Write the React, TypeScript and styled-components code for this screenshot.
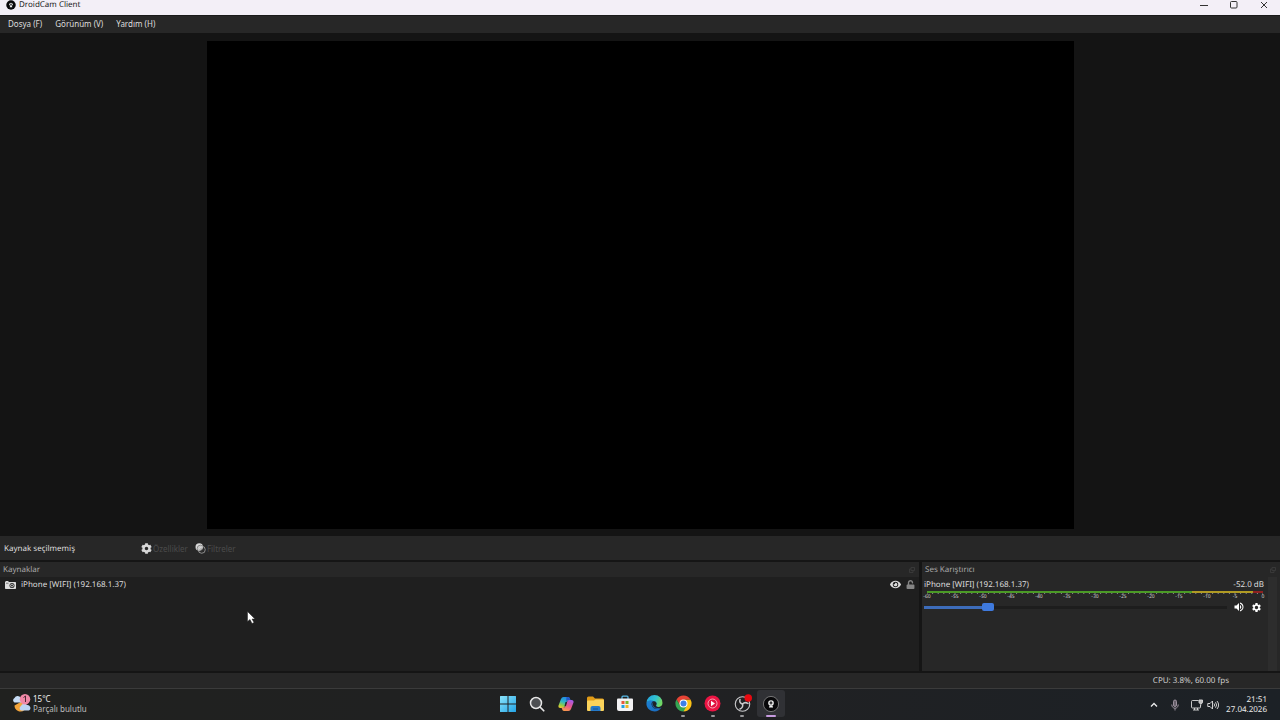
import React, { useState } from "react";
import styled, { createGlobalStyle } from "styled-components";
import { FaCog, FaEye, FaUnlock } from "react-icons/fa";
import { MdSettings, MdVolumeUp } from "react-icons/md";

const GlobalStyle = createGlobalStyle`
  * { box-sizing: border-box; }
  body { margin: 0; background: #141414; }
  button { font: inherit; color: inherit; background: none; border: 0; padding: 0; }
  svg { display: block; flex: none; }
`;

const Desktop = styled.div`
  position: relative;
  height: 100vh;
  display: flex;
  flex-direction: column;
  overflow: hidden;
  font: 8px/12px "Noto Sans", "Open Sans", sans-serif;
  text-rendering: geometricPrecision;
  color: #dedede;
`;

const TitleBar = styled.header`
  display: flex;
  align-items: center;
  gap: 3px;
  height: 16px;
  padding: 0 1px 5px 6px;
  background: #f3eff7;
  border-bottom: 1px solid #1a1a1a;
  color: #222;
`;

const WindowTitle = styled.h1`
  flex: 1;
  margin: 0;
  font: inherit;
`;

const WindowControls = styled.div`
  display: flex;
`;

const WindowButton = styled.button`
  display: grid;
  place-items: center;
  width: 30px;
  height: 10px;
`;

const MenuBar = styled.nav`
  display: flex;
  gap: 13px;
  height: 17px;
  padding: 2px 8px 3px;
  align-items: center;
  background: #272727;
`;

const MenuButton = styled.button``;

const Preview = styled.main`
  flex: 1;
  min-height: 0;
  display: flex;
  justify-content: center;
  padding: 8px 0 7px 1px;
  background: #141414;
`;

const VideoCanvas = styled.div`
  aspect-ratio: 16 / 9;
  background: #000;
`;

const SourceToolbar = styled.section`
  display: flex;
  align-items: center;
  height: 24px;
  padding: 1px 4px 0;
  background: #272727;
`;

const SourceStatus = styled.span`
  width: 137px;
`;

const ToolButton = styled.button`
  display: flex;
  align-items: center;
  gap: 1px;
  margin-right: 7px;
  &:disabled { color: #4b4b4b; }
  svg { color: #d8d8d8; }
`;

const Docks = styled.div`
  display: grid;
  grid-template-columns: minmax(0, 1fr) 358px;
  gap: 3px;
  height: 113px;
  padding: 2px 0;
  background: #151515;
`;

const Dock = styled.section<{ $fill: string }>`
  display: flex;
  flex-direction: column;
  background: ${(p) => p.$fill};
`;

const DockHeader = styled.div`
  display: flex;
  align-items: center;
  justify-content: space-between;
  height: 15px;
  padding: 1px 4px 0 3px;
  background: #272727;
  color: #a8a8a8;
`;

const DockTitle = styled.h2`
  margin: 0;
  font: inherit;
`;

const SourceRow = styled.div`
  display: flex;
  align-items: center;
  height: 15px;
  padding: 0 1px 0 5px;
`;

const SourceName = styled.span`
  flex: 1;
  padding-left: 5px;
`;

const RowButton = styled.button`
  display: grid;
  place-items: center;
  width: 15px;
  height: 12px;
`;

const MixerBody = styled.div`
  display: flex;
  flex: 1;
  padding-right: 3px;
`;

const Channel = styled.div`
  flex: 1;
  min-width: 0;
  padding: 2px 4px 0 2px;
`;

const ChannelHead = styled.div`
  display: flex;
  justify-content: space-between;
`;

const Meter = styled.div`
  margin: 0 1px 0 3px;
`;

const MeterBar = styled.div`
  height: 2px;
  background: linear-gradient(90deg, #4b9a26 0 79%, #b09a23 79% 97%, #8f2020 97%);
`;

const Ticks = styled.svg`
  width: 100%;
  height: 2px;
`;

const ScaleLabels = styled.div`
  display: flex;
  justify-content: space-between;
  font-size: 5px;
  line-height: 5px;
  color: #d0d0d0;
`;

const ScaleLabel = styled.span`
  display: flex;
  justify-content: center;
  width: 0;
`;

const VolumeRow = styled.div`
  display: flex;
  align-items: center;
  height: 14px;
  padding-right: 2px;
`;

const VolumeSlider = styled.input`
  appearance: none;
  flex: 1;
  min-width: 0;
  height: 9px;
  margin: 0 6px 0 0;
  background: linear-gradient(90deg, #3d6cba 0 20%, #1d1d1d 20%) center / 100% 3px no-repeat;
  &::-webkit-slider-thumb {
    appearance: none;
    width: 12px;
    height: 8px;
    border-radius: 2px;
    background: #3f7ade;
  }
`;

const ChannelButton = styled.button`
  display: grid;
  place-items: center;
  width: 11px;
  height: 12px;
  & + & { margin-left: 7px; }
`;

const ScrollTrack = styled.div`
  width: 9px;
  background: #2d2d2d;
`;

const StatusBar = styled.footer`
  height: 15px;
  padding: 2px 51px 0 0;
  text-align: right;
  background: #272727;
  color: #cfcfcf;
`;

const Taskbar = styled.footer`
  display: grid;
  grid-template-columns: 1fr 293px 1fr;
  height: 32px;
  border-top: 1px solid #3b3b3b;
  background: linear-gradient(90deg, #20211f, #202123 60%, #1c2126);
  line-height: 10px;
`;

const Weather = styled.button`
  display: flex;
  align-items: center;
  gap: 2px;
  padding: 0 0 1px 12px;
  text-align: left;
  color: #bdbdbd;
`;

const Temperature = styled.strong`
  display: block;
  font-weight: 400;
  color: #f0f0f0;
`;

const Apps = styled.div`
  display: flex;
  justify-content: space-between;
  align-items: center;
  padding: 0 1px 2px 0;
`;

const AppButton = styled.button<{ $active?: boolean; $running?: boolean }>`
  position: relative;
  display: grid;
  place-items: center;
  width: 28px;
  height: 27px;
  border-radius: 3px;
  background: ${(p) => (p.$active ? "#303135" : "transparent")};
  &::after {
    content: "";
    display: ${(p) => (p.$running ? "block" : "none")};
    position: absolute;
    bottom: 0;
    width: ${(p) => (p.$active ? 10 : 4)}px;
    height: 2px;
    border-radius: 1px;
    background: ${(p) => (p.$active ? "#c79be0" : "#98989b")};
  }
`;

const Tray = styled.div`
  display: flex;
  justify-content: flex-end;
  align-items: center;
  padding: 0 13px 0 0;
  color: #ececec;
`;

const TrayButton = styled.button<{ $gap: number }>`
  margin-right: ${(p) => p.$gap}px;
`;

const Clock = styled.time`
  width: 48px;
  display: flex;
  flex-direction: column;
  align-items: flex-end;
`;

const Pointer = styled.svg`
  position: absolute;
  left: 247px;
  top: 611px;
`;

const LensLogo = ({ size }: { size: number }) => (
  <svg width={size} height={size} viewBox="0 0 16 16" aria-hidden="true">
    <circle cx="8" cy="8" r="7.6" fill="#08080a" stroke="#8a8a8a" strokeWidth={size > 12 ? 0.8 : 0} />
    <circle cx="8" cy="7" r="2.8" fill="#f2f2f2" />
    <circle cx="8" cy="7" r="1.400" fill="#08080a" />
    <circle cx="8" cy="7" r="0.6" fill="#f2f2f2" />
    <path d="M6.6 9.4h2.8l.7 2.2H5.9z" fill="#f2f2f2" />
  </svg>
);

const FiltersIcon = () => (
  <svg width="11" height="11" viewBox="0 0 22 22" aria-hidden="true">
    <circle cx="8.5" cy="8" r="7.5" fill="#d8d8d8" />
    <circle cx="11" cy="11" r="6.6" fill="none" stroke="#3a3a3a" strokeWidth="1" />
    <circle cx="13.5" cy="13.5" r="7" fill="none" stroke="#b8b8b8" strokeWidth="1.4" />
    <path d="M9 14l5-5M11 15l4-4" stroke="#555" strokeWidth="1" />
  </svg>
);

const CameraIcon = () => (
  <svg width="11" height="8" viewBox="0 0 22 16" aria-hidden="true">
    <path d="M0 3V2h1V0h6v2h13.500Q22 2 22 3.500V14.500Q22 16 20.500 16H1.500Q0 16 0 14.500z" fill="#dcdcdc" />
    <circle cx="14" cy="9" r="5" fill="#1f1f1f" />
    <circle cx="14" cy="9" r="3.400" fill="#dcdcdc" />
    <circle cx="14" cy="9" r="1.800" fill="#1f1f1f" />
    <path d="M2 4.500h5" stroke="#1f1f1f" strokeWidth="1" />
  </svg>
);

const FloatIcon = () => (
  <svg width="6" height="6" viewBox="0 0 12 12" fill="none" stroke="#3c3c3c" strokeWidth="1.6" aria-hidden="true">
    <path d="M4 1h7v6H4zM4 4H1v7h7V7" />
  </svg>
);

const WeatherIcon = () => (
  <svg width="19" height="20" viewBox="0 0 38 40" aria-hidden="true">
    <path d="M5 23a12 12 0 0 0 20 9l4-10-8-8z" fill="#f2a43a" />
    <path d="M5 17a5 5 0 0 1 0-9 7 7 0 0 1 13 1l3 8z" fill="#c6dcf5" />
    <path d="M18 33a5 5 0 0 1 0-9 7 7 0 0 1 12-2 6 6 0 0 1 4 11z" fill="#bcd4f3" />
    <circle cx="26" cy="10.500" r="10.500" fill="#f088a6" />
    <path d="M23 7l4-3v12" stroke="#4c2834" strokeWidth="2" fill="none" />
  </svg>
);

const WindowsIcon = () => (
  <svg width="16" height="16" viewBox="0 0 32 32" aria-hidden="true">
    <defs>
      <linearGradient id="win" x2="1" y2="1">
        <stop stopColor="#8be4fb" />
        <stop offset="1" stopColor="#23a4e6" />
      </linearGradient>
    </defs>
    <path d="M0 1q0-1 1-1h14v15H0zM17 0h14q1 0 1 1v14H17zM0 17h15v15H1q-1 0-1-1zM17 17h15v14q0 1-1 1H17z" fill="url(#win)" />
  </svg>
);

const SearchIcon = () => (
  <svg width="16" height="16" viewBox="0 0 32 32" aria-hidden="true">
    <circle cx="14" cy="14" r="11" fill="#4d4f52" stroke="#e6e6e6" strokeWidth="3" />
    <path d="M22.500 22.500l7 7" stroke="#e6e6e6" strokeWidth="3.500" strokeLinecap="round" />
  </svg>
);

const CopilotIcon = () => (
  <svg width="16" height="16" viewBox="0 0 32 32" aria-hidden="true">
    <defs>
      <linearGradient id="cpa" x1=".6" x2=".2" y2="1">
        <stop stopColor="#2186e8" />
        <stop offset=".45" stopColor="#30b7c5" />
        <stop offset=".75" stopColor="#8dcc4b" />
        <stop offset="1" stopColor="#f2cc2c" />
      </linearGradient>
      <linearGradient id="cpb" x1=".7" x2=".3" y2="1">
        <stop stopColor="#a65be8" />
        <stop offset=".5" stopColor="#e6558d" />
        <stop offset="1" stopColor="#f99b4a" />
      </linearGradient>
    </defs>
    <path d="M6 6q1.500-4 5-4h9q3 0 4 4l1 3h-4q-3 0-4 3l-3 8q-1 4-4 4H5q-5 0-4-5z" fill="url(#cpa)" />
    <path d="M26 26q-1.500 4-5 4h-9q-3 0-4-4l-1-3h4q3 0 4-3l3-8q1-4 4-4h5q5 0 4 5z" fill="url(#cpb)" />
    <path d="M17 2h3q3 0 4 4l1 2h-5q-3 0-4 3z" fill="#2458c8" />
    <path d="M15 12h3l-2 8h-3z" fill="#25252a" />
  </svg>
);

const FolderIcon = () => (
  <svg width="17" height="16" viewBox="0 0 34 32" aria-hidden="true">
    <path d="M0 4q0-3 3-3h9l4 4h15q3 0 3 3v8H0z" fill="#e19b17" />
    <path d="M0 11q0-2 2-2h12l3-2h15q2 0 2 2v19q0 2-2 2H2q-2 0-2-2z" fill="#fbd35b" />
    <path d="M7 30v-6q0-4 4-4h12q4 0 4 4v6z" fill="#2479c9" />
    <path d="M12 26h10" stroke="#155493" strokeWidth="2" />
  </svg>
);

const StoreIcon = () => (
  <svg width="16" height="17" viewBox="0 0 32 34" aria-hidden="true">
    <path d="M10 9V4q0-2 2-2h8q2 0 2 2v5" fill="none" stroke="#58bdec" strokeWidth="2.500" />
    <path d="M0 9q0-2 2-2h28q2 0 2 2v19q0 4-4 4H4q-4 0-4-4z" fill="#f2f2f4" />
    <path d="M9 12h6v6H9z" fill="#e8583a" />
    <path d="M17 12h6v6h-6z" fill="#79b72a" />
    <path d="M9 20h6v6H9z" fill="#209fe0" />
    <path d="M17 20h6v6h-6z" fill="#f3b321" />
  </svg>
);

const EdgeIcon = () => (
  <svg width="17" height="17" viewBox="0 0 34 34" aria-hidden="true">
    <defs>
      <linearGradient id="edt" x2="1" y2=".4">
        <stop stopColor="#229fe0" />
        <stop offset=".6" stopColor="#31c3cf" />
        <stop offset="1" stopColor="#70d765" />
      </linearGradient>
      <linearGradient id="edb" x2="1" y2="1">
        <stop stopColor="#1c83d4" />
        <stop offset="1" stopColor="#1a68bd" />
      </linearGradient>
    </defs>
    <path d="M1 16a16 16 0 0 1 32 0c0 5-4 8-8 8s-6-1-5-3c3-5-1-9-6-9S3 12 1 16z" fill="url(#edt)" />
    <path d="M1 16c2-5 8-7 14-4-4 1-5 6-3 10 3 7 11 8 19 3-5 8-13 9-19 7C5 30 0 23 1 16z" fill="url(#edb)" />
    <path d="M15 13c-4 3-4 9 1 13 4 3 10 3 15-1-4 2-8 0-10-3-2-2 1-3 0-6-1-2-3-4-6-3z" fill="#1a5aa3" />
    <path d="M15 14c4-2 7 2 5 6-1 2 0 4 5 4 3 0 5-1 6-2-4 5-13 5-16 0-2-3-2-6 0-8z" fill="#202123" />
  </svg>
);

const ChromeIcon = () => (
  <svg width="17" height="17" viewBox="0 0 34 34" aria-hidden="true">
    <path d="M17 17L30.860 9A16 16 0 0 1 17 33z" fill="#fbc116" />
    <path d="M17 9h13.860L24 21z" fill="#fbc116" />
    <path d="M17 9h13.860A16 16 0 0 0 3.140 9l7 12z" fill="#e64335" />
    <path d="M10 21l7 4 7-4-7 12A16 16 0 0 1 3.140 9z" fill="#35a552" />
    <circle cx="17" cy="17" r="8" fill="#fff" />
    <circle cx="17" cy="17" r="6" fill="#3c7fe8" />
  </svg>
);

const MusicIcon = () => (
  <svg width="17" height="17" viewBox="0 0 34 34" aria-hidden="true">
    <circle cx="17" cy="17" r="16" fill="#ec1443" />
    <circle cx="17" cy="17" r="9" fill="#e01340" stroke="#f7b7c4" strokeWidth="1.800" />
    <path d="M14 11.500v11l8-5.500z" fill="#fff" />
  </svg>
);

const ObsIcon = () => (
  <svg width="19" height="19" viewBox="0 0 38 38" aria-hidden="true">
    <circle cx="19" cy="20" r="14.500" fill="#1f2022" stroke="#c9c9cb" strokeWidth="2.200" />
    <g fill="none" stroke="#c9c9cb" strokeWidth="3" strokeLinecap="round">
      <path d="M19 20q-7-2-5-9" />
      <path d="M19 20q5-5 11-1" />
      <path d="M19 20q2 7-5 10" />
    </g>
    <circle cx="30.500" cy="8" r="7.500" fill="#e70910" />
  </svg>
);

const ChevronIcon = () => (
  <svg width="8" height="6" viewBox="0 0 16 12" fill="none" stroke="currentColor" strokeWidth="2.600" aria-hidden="true">
    <path d="M2 9l6-6 6 6" />
  </svg>
);

const MicIcon = () => (
  <svg width="8" height="12" viewBox="0 0 16 24" fill="none" stroke="#a69ba8" strokeWidth="1.800" aria-hidden="true">
    <rect x="5" y="2" width="6" height="13" rx="3" fill="#66606a" />
    <path d="M1.500 11c0 10 13 10 13 0M8 18.500V23" />
  </svg>
);

const NetworkIcon = () => (
  <svg width="12" height="12" viewBox="0 0 24 24" fill="none" stroke="#dadada" strokeWidth="1.800" aria-hidden="true">
    <path d="M15 3H3Q1 3 1 5v11q0 2 2 2h14q2 0 2-2v-4M7 18v4M13 18v4M4 22h12" />
    <path d="M16 2h7v5q0 2-3.500 2T16 7zM19.500 9v4" fill="#bdbdbd" />
  </svg>
);

const SpeakerIcon = () => (
  <svg width="12" height="12" viewBox="0 0 24 24" fill="none" stroke="#e2e2e2" strokeWidth="1.800" aria-hidden="true">
    <path d="M1.500 9v6H6l5 5V4L6 9zM14 9q2.500 3 0 6M17 6.500q4.500 5.500 0 11M20 4q6.500 8 0 16" />
  </svg>
);

const levels = [-60, -55, -50, -45, -40, -35, -30, -25, -20, -15, -10, -5, 0];

const apps = [
  { name: "Başlat", icon: <WindowsIcon /> },
  { name: "Ara", icon: <SearchIcon /> },
  { name: "Copilot", icon: <CopilotIcon /> },
  { name: "Dosya Gezgini", icon: <FolderIcon /> },
  { name: "Microsoft Store", icon: <StoreIcon /> },
  { name: "Microsoft Edge", icon: <EdgeIcon /> },
  { name: "Google Chrome", icon: <ChromeIcon />, running: true },
  { name: "YouTube Music", icon: <MusicIcon />, running: true },
  { name: "OBS Studio", icon: <ObsIcon />, running: true },
  { name: "DroidCam Client", icon: <LensLogo size={16} />, running: true, active: true },
];

export default function App() {
  const [volume, setVolume] = useState(20);
  return (
    <Desktop>
      <GlobalStyle />
      <TitleBar>
        <LensLogo size={10} />
        <WindowTitle>DroidCam Client</WindowTitle>
        <WindowControls>
          <WindowButton aria-label="Simge durumuna küçült">
            <svg width="8" height="8" stroke="#333" aria-hidden="true"><path d="M0 4.500h8" /></svg>
          </WindowButton>
          <WindowButton aria-label="Ekranı kapla">
            <svg width="8" height="8" fill="none" stroke="#333" aria-hidden="true"><rect x=".5" y=".5" width="6.500" height="6.500" rx="1" /></svg>
          </WindowButton>
          <WindowButton aria-label="Kapat">
            <svg width="8" height="8" stroke="#333" aria-hidden="true"><path d="M1 1l6 6M7 1L1 7" /></svg>
          </WindowButton>
        </WindowControls>
      </TitleBar>
      <MenuBar>
        <MenuButton>Dosya (F)</MenuButton>
        <MenuButton>Görünüm (V)</MenuButton>
        <MenuButton>Yardım (H)</MenuButton>
      </MenuBar>
      <Preview>
        <VideoCanvas />
      </Preview>
      <SourceToolbar>
        <SourceStatus>Kaynak seçilmemiş</SourceStatus>
        <ToolButton disabled><FaCog size={11} />Özellikler</ToolButton>
        <ToolButton disabled><FiltersIcon />Filtreler</ToolButton>
      </SourceToolbar>
      <Docks>
        <Dock $fill="#1f1f1f">
          <DockHeader>
            <DockTitle>Kaynaklar</DockTitle>
            <FloatIcon />
          </DockHeader>
          <SourceRow>
            <CameraIcon />
            <SourceName>iPhone [WIFI] (192.168.1.37)</SourceName>
            <RowButton aria-label="Görünürlük"><FaEye size={11} /></RowButton>
            <RowButton aria-label="Kilit"><FaUnlock size={9} color="#858585" /></RowButton>
          </SourceRow>
        </Dock>
        <Dock $fill="#272727">
          <DockHeader>
            <DockTitle>Ses Karıştırıcı</DockTitle>
            <FloatIcon />
          </DockHeader>
          <MixerBody>
            <Channel>
              <ChannelHead>
                <label htmlFor="volume">iPhone [WIFI] (192.168.1.37)</label>
                <output htmlFor="volume">-52.0 dB</output>
              </ChannelHead>
              <Meter>
                <MeterBar />
                <Ticks viewBox="0 0 336 2" preserveAspectRatio="none" stroke="#8c8c8c" aria-hidden="true">
                  {Array.from({ length: 61 }, (_, i) => (
                    <path key={i} d={`M${i * 5.6} 0v${i % 5 ? 1 : 2}`} />
                  ))}
                </Ticks>
                <ScaleLabels>
                  {levels.map((level) => <ScaleLabel key={level}>{level}</ScaleLabel>)}
                </ScaleLabels>
              </Meter>
              <VolumeRow>
                <VolumeSlider
                  id="volume"
                  type="range"
                  min={0}
                  max={100}
                  value={volume}
                  onChange={(e) => setVolume(Number(e.target.value))}
                />
                <ChannelButton aria-label="Sesi kapat"><MdVolumeUp size={12} color="#fff" /></ChannelButton>
                <ChannelButton aria-label="Ses ayarları"><MdSettings size={11} color="#fff" /></ChannelButton>
              </VolumeRow>
            </Channel>
            <ScrollTrack />
          </MixerBody>
        </Dock>
      </Docks>
      <StatusBar>CPU: 3.8%, 60.00 fps</StatusBar>
      <Taskbar>
        <Weather>
          <WeatherIcon />
          <span>
            <Temperature>15°C</Temperature>
            Parçalı bulutlu
          </span>
        </Weather>
        <Apps>
          {apps.map((app) => (
            <AppButton key={app.name} aria-label={app.name} $running={app.running} $active={app.active}>
              {app.icon}
            </AppButton>
          ))}
        </Apps>
        <Tray>
          <TrayButton $gap={13} aria-label="Gizli simgeler"><ChevronIcon /></TrayButton>
          <TrayButton $gap={12} aria-label="Mikrofon"><MicIcon /></TrayButton>
          <TrayButton $gap={4} aria-label="Ağ"><NetworkIcon /></TrayButton>
          <TrayButton aria-label="Ses" $gap={0}><SpeakerIcon /></TrayButton>
          <Clock dateTime="2026-04-27T21:51"><span>21:51</span><span>27.04.2026</span></Clock>
        </Tray>
      </Taskbar>
      <Pointer width="8" height="13" viewBox="0 0 16 26" aria-hidden="true">
        <path d="M1 1v20l5-4 4 8 4-2-4-7h6z" fill="#fff" stroke="#222" strokeWidth="1" />
      </Pointer>
    </Desktop>
  );
}
